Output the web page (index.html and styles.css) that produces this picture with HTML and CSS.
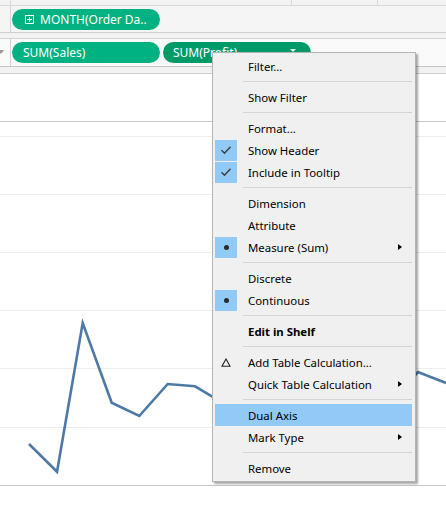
FILE: index.html
```html
<!DOCTYPE html>
<html>
<head>
<meta charset="utf-8">
<link rel="stylesheet" href="styles.css">
</head>
<body>
<div class="page">
  <div class="top-strip">
    <div class="ts-cell ts-a"></div>
    <div class="ts-cell ts-b"></div>
    <div class="ts-cell ts-c"></div>
    <div class="ts-cell ts-d"></div>
  </div>
  <div class="shelf shelf-cols">
    <div class="shelf-label"></div>
    <div class="shelf-body">
      <div class="pill pill-dim">
        <svg class="plus" width="9" height="9" viewBox="0 0 9 9"><rect x="0.5" y="0.5" width="8" height="8" fill="none" stroke="#fff" stroke-width="1"/><path d="M2 4.5H7M4.5 2V7" stroke="#fff" stroke-width="1"/></svg>
        <span>MONTH(Order Da..</span>
      </div>
    </div>
  </div>
  <div class="gap"></div>
  <div class="shelf shelf-rows">
    <div class="shelf-label"><span class="tri"></span></div>
    <div class="shelf-body">
      <div class="pill pill-sales"><span>SUM(Sales)</span></div>
      <div class="pill pill-profit"><span>SUM(Profit)</span><span class="caret"></span></div>
    </div>
  </div>
  <div class="gap gap2"></div>
  <div class="chart">
    <div class="chart-head"></div>
    <div class="plot">
      <svg width="446" height="363" viewBox="0 0 446 363">
        <g stroke="#ededed" stroke-width="1">
          <line x1="0" y1="14.5" x2="446" y2="14.5"/>
          <line x1="0" y1="72.5" x2="446" y2="72.5"/>
          <line x1="0" y1="130.5" x2="446" y2="130.5"/>
          <line x1="0" y1="188.5" x2="446" y2="188.5"/>
          <line x1="0" y1="246.5" x2="446" y2="246.5"/>
          <line x1="0" y1="305.5" x2="446" y2="305.5"/>
        </g>
        <polyline fill="none" stroke="#4e79a7" stroke-width="2.6" stroke-linejoin="miter"
          points="29,322 57,349.7 82.7,201 111.7,280.7 139.3,294 167.7,262 195,264.3 212.3,274.7 250,290 300,270 350,300 390,280 418,250 446,261"/>
      </svg>
    </div>
  </div>

  <div class="menu">
    <div class="mi"><span class="ic"></span><span class="lb">Filter...</span></div>
    <div class="sep"></div>
    <div class="mi"><span class="ic"></span><span class="lb">Show Filter</span></div>
    <div class="sep"></div>
    <div class="mi"><span class="ic"></span><span class="lb">Format...</span></div>
    <div class="mi"><span class="ic on"><svg width="12" height="10" viewBox="0 0 12 10"><path d="M1.5 5.2L4.5 8.2L10.5 1.8" fill="none" stroke="#3c3c3c" stroke-width="1.4"/></svg></span><span class="lb">Show Header</span></div>
    <div class="mi"><span class="ic on"><svg width="12" height="10" viewBox="0 0 12 10"><path d="M1.5 5.2L4.5 8.2L10.5 1.8" fill="none" stroke="#3c3c3c" stroke-width="1.4"/></svg></span><span class="lb">Include in Tooltip</span></div>
    <div class="sep"></div>
    <div class="mi"><span class="ic"></span><span class="lb">Dimension</span></div>
    <div class="mi"><span class="ic"></span><span class="lb">Attribute</span></div>
    <div class="mi"><span class="ic on"><span class="dot"></span></span><span class="lb">Measure (Sum)</span><span class="arr"></span></div>
    <div class="sep"></div>
    <div class="mi"><span class="ic"></span><span class="lb">Discrete</span></div>
    <div class="mi"><span class="ic on"><span class="dot"></span></span><span class="lb">Continuous</span></div>
    <div class="sep"></div>
    <div class="mi"><span class="ic"></span><span class="lb bold">Edit in Shelf</span></div>
    <div class="sep"></div>
    <div class="mi"><span class="ic"><svg width="10" height="9" viewBox="0 0 10 9"><path d="M5 1L9 8.2H1Z" fill="none" stroke="#222" stroke-width="1.1"/></svg></span><span class="lb">Add Table Calculation...</span></div>
    <div class="mi"><span class="ic"></span><span class="lb">Quick Table Calculation</span><span class="arr"></span></div>
    <div class="sep"></div>
    <div class="mi hl"><span class="ic"></span><span class="lb">Dual Axis</span></div>
    <div class="mi"><span class="ic"></span><span class="lb">Mark Type</span><span class="arr"></span></div>
    <div class="sep"></div>
    <div class="mi"><span class="ic"></span><span class="lb">Remove</span></div>
  </div>
</div>
</body>
</html>
```

FILE: styles.css
```css
* { box-sizing: border-box; }
html, body { margin: 0; padding: 0; background: #fff; }
body { width: 446px; height: 509px; overflow: hidden; font-family: "Noto Sans", "Liberation Sans", sans-serif; }
.page { position: relative; width: 446px; height: 509px; }

.top-strip { height: 6px; display: flex; background: #f3f3f3; border-bottom: 1px solid #d9d9d9; }
.ts-cell { height: 100%; }
.ts-a { width: 11px; border-right: 1px solid #d9d9d9; }
.ts-b { width: 281px; border-right: 1px solid #d9d9d9; }
.ts-c { width: 86px; border-right: 1px solid #d9d9d9; }
.ts-d { flex: 1; }

.shelf { display: flex; }
.shelf-label { width: 11px; border-right: 1px solid #d4d4d4; position: relative; }
.shelf-body { flex: 1; display: flex; align-items: center; gap: 3px; padding-left: 1px; }
.shelf-cols { height: 27px; background: #f5f5f5; border-bottom: 1px solid #cfcfcf; }
.shelf-cols .shelf-body { padding-top: 1px; }
.shelf-rows { height: 28px; background: #fafafa; border-bottom: 1px solid #c4c4c4; }
.gap { height: 6px; background: #f2f2f2; border-bottom: 1px solid #d2d2d2; }
.gap2 { height: 7px; border-bottom: 1px solid #cfcfcf; }

.tri { position: absolute; left: -2px; top: 11px; width: 0; height: 0; border-left: 3px solid transparent; border-right: 3px solid transparent; border-top: 4px solid #9a9a9a; }

.pill { height: 21px; border-radius: 11px; display: flex; align-items: center; color: #fff; font-size: 12px; white-space: nowrap; width: 148px; }
.pill-dim { background: #00b181; padding-left: 13px; }
.pill-dim .plus { margin-right: 6px; }
.pill-sales { background: #00b181; padding-left: 11px; }
.pill-profit { background: #009a69; padding-left: 10px; position: relative; }
.caret { position: absolute; left: 127px; top: 7px; width: 0; height: 0; border-left: 3px solid transparent; border-right: 3px solid transparent; border-top: 3px solid #e8f5ee; }

.chart-head { height: 47px; background: #fff; }
.plot { border-top: 1px solid #c6c6c6; border-bottom: 1px solid #c6c6c6; height: 365px; }
.plot svg { display: block; }

.menu { position: absolute; left: 212px; top: 52px; width: 204px; background: #f0f0f0; border: 1px solid #b4b4b4; box-shadow: 2px 2px 2px rgba(0,0,0,0.35); padding: 2px 0 2px 0; font-size: 11.4px; color: #000; }
.mi { height: 22px; display: flex; align-items: center; margin: 0 3px 0 2px; }
.mi.hl { background: #91c9f7; }
.ic { width: 22px; height: 21px; display: flex; align-items: center; justify-content: center; flex: none; }
.ic.on { background: #91c9f7; }
.dot { width: 5px; height: 5px; border-radius: 50%; background: #2a2a2a; }
.lb { margin-left: 11px; flex: 1; white-space: nowrap; }
.lb.bold { font-weight: bold; }
.arr { width: 0; height: 0; border-top: 3.5px solid transparent; border-bottom: 3.5px solid transparent; border-left: 4px solid #000; margin-right: 10px; }
.sep { height: 1px; background: #d5d5d5; margin: 4px 3px 4px 30px; }
```
